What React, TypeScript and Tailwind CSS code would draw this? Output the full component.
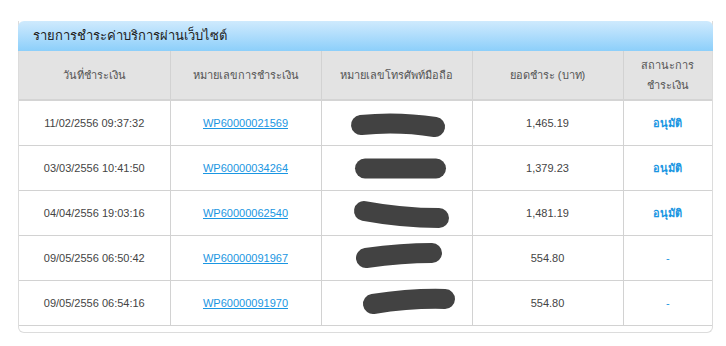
const rows = [
  { date: '11/02/2556 09:37:32', ref: 'WP60000021569', amount: '1,465.19', status: 'อนุมัติ', scribble: 'M39 24 Q 75 20 113 26' },
  { date: '03/03/2556 10:41:50', ref: 'WP60000034264', amount: '1,379.23', status: 'อนุมัติ', scribble: 'M43 22.5 L 114 22.5' },
  { date: '04/04/2556 19:03:16', ref: 'WP60000062540', amount: '1,481.19', status: 'อนุมัติ', scribble: 'M42 20 Q 80 27 117 27' },
  { date: '09/05/2556 06:50:42', ref: 'WP60000091967', amount: '554.80', status: '-', scribble: 'M44 22 Q 80 17 110 17' },
  { date: '09/05/2556 06:54:16', ref: 'WP60000091970', amount: '554.80', status: '-', scribble: 'M51 23 Q 90 17 123 18' },
];

function Scribble({ d }: { d: string }) {
  return (
    <svg width="151" height="44" viewBox="0 0 151 44" className="block">
      <path d={d} stroke="#424242" strokeWidth="20" strokeLinecap="round" fill="none" />
    </svg>
  );
}

export default function App() {
  const font = { fontFamily: '"Liberation Sans", "DejaVu Sans", sans-serif' };
  return (
    <div className="w-[726px] h-[346px] bg-white pt-[21px] pl-[18px]" style={font}>
      <div className="w-[695px] border border-t-0 border-[#dcdcdc] rounded-b-[6px] pb-[6px]">
        <div className="h-[30px] -mx-px rounded-t-[6px] bg-gradient-to-b from-[#cfeafd] to-[#8ccffa] flex items-center pl-[15px]">
          <span className="text-[13px] text-[#222]">รายการชำระค่าบริการผ่านเว็บไซต์</span>
        </div>
        <table className="w-full border-collapse text-[11px] text-[#444] table-fixed">
          <colgroup>
            <col className="w-[151px]" />
            <col className="w-[151px]" />
            <col className="w-[151px]" />
            <col className="w-[151px]" />
            <col />
          </colgroup>
          <thead>
            <tr className="h-[49px] bg-[#e3e3e3] text-[#555] border-b-2 border-[#d4d4d4]">
              <th className="font-normal border-r border-[#d2d2d2]">วันที่ชำระเงิน</th>
              <th className="font-normal border-r border-[#d2d2d2]">หมายเลขการชำระเงิน</th>
              <th className="font-normal border-r border-[#d2d2d2]">หมายเลขโทรศัพท์มือถือ</th>
              <th className="font-normal border-r border-[#d2d2d2]">ยอดชำระ (บาท)</th>
              <th className="font-normal leading-[20px] px-2">สถานะการ<br />ชำระเงิน</th>
            </tr>
          </thead>
          <tbody>
            {rows.map((r) => (
              <tr key={r.ref} className="h-[45px] border-b border-[#d2d2d2]">
                <td className="text-center border-r border-[#d2d2d2]">{r.date}</td>
                <td className="text-center border-r border-[#d2d2d2]">
                  <a href="#" className="text-[#1a96e2] underline">{r.ref}</a>
                </td>
                <td className="p-0 border-r border-[#d2d2d2]">
                  <Scribble d={r.scribble} />
                </td>
                <td className="text-center border-r border-[#d2d2d2]">{r.amount}</td>
                <td className={`text-center text-[#1a96e2] ${r.status === '-' ? '' : 'font-bold'}`}>{r.status}</td>
              </tr>
            ))}
          </tbody>
        </table>
      </div>
    </div>
  );
}
